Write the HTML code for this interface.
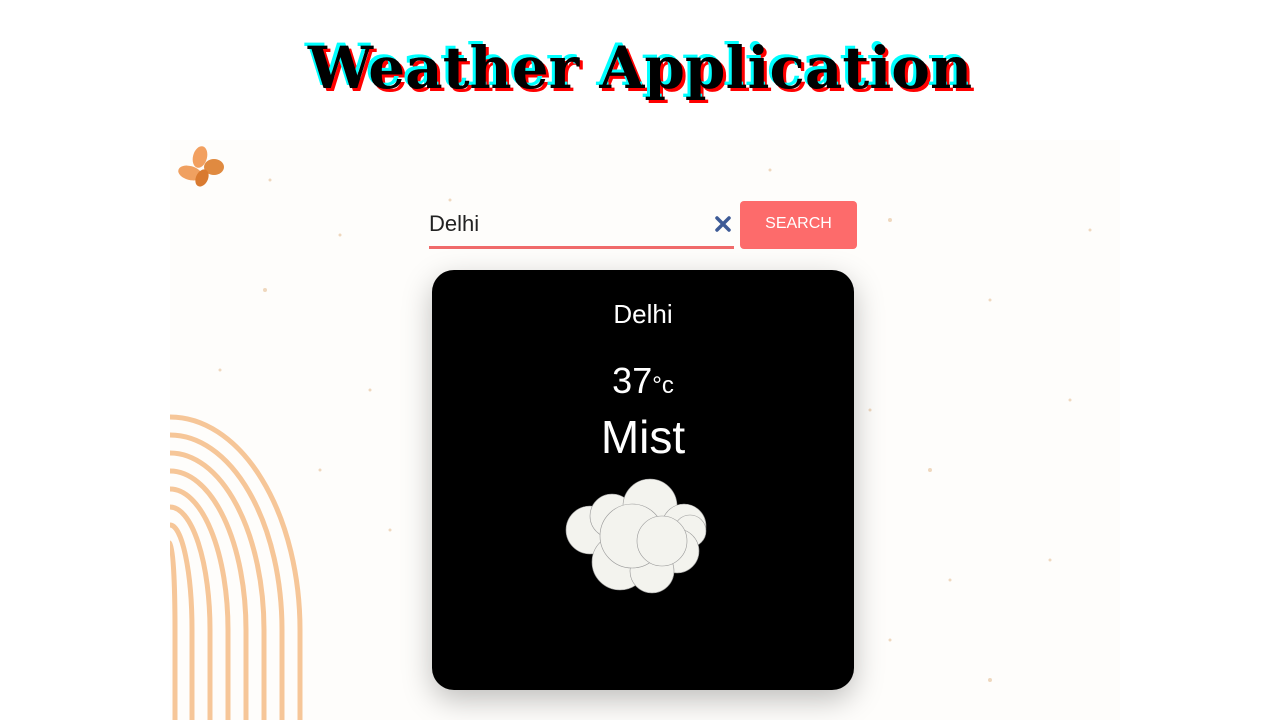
<!DOCTYPE html>
<html><head><style>
body{margin:0;width:1280px;height:720px;background:#fff;position:relative;overflow:hidden;font-family:"Liberation Sans",sans-serif}
h1{position:absolute;top:34px;left:0;width:1280px;text-align:center;margin:0;font:bold 58px "DejaVu Serif",serif;color:#000;text-shadow:-3px -3px 0 #0ff,3px 3px 0 #f00}
.bg{position:absolute;left:170px;top:140px;width:950px;height:580px;background:#fefdfb}
.inp{position:absolute;left:429px;top:200px;width:305px;height:46px;border-bottom:3px solid #f06a6a}
.inp span{position:absolute;left:0;top:11px;font-size:22px;color:#222}
.btn{position:absolute;left:740px;top:201px;width:117px;height:48px;background:#fd6b6b;border-radius:4px;color:#fff;font-size:16px;text-align:center;line-height:46px}
.card{position:absolute;left:432px;top:270px;width:422px;height:420px;background:#000;border-radius:22px;box-shadow:0 10px 30px rgba(0,0,0,.25);color:#fff;text-align:center;font-family:"Liberation Sans",sans-serif}
</style></head><body>
<h1>Weather Application</h1>
<div class="bg">
<svg width="950" height="580" style="position:absolute;left:0;top:0">
<g fill="#e8c7a4" opacity=".7">
<circle cx="100" cy="40" r="1.5"/><circle cx="170" cy="95" r="1.5"/><circle cx="95" cy="150" r="2"/><circle cx="280" cy="60" r="1.5"/><circle cx="600" cy="30" r="1.5"/><circle cx="720" cy="80" r="2"/><circle cx="820" cy="160" r="1.5"/><circle cx="900" cy="260" r="1.5"/><circle cx="760" cy="330" r="2"/><circle cx="880" cy="420" r="1.5"/><circle cx="720" cy="500" r="1.5"/><circle cx="820" cy="540" r="2"/><circle cx="200" cy="250" r="1.5"/><circle cx="150" cy="330" r="1.5"/><circle cx="220" cy="390" r="1.5"/><circle cx="640" cy="200" r="1.5"/><circle cx="920" cy="90" r="1.5"/><circle cx="50" cy="230" r="1.5"/><circle cx="780" cy="440" r="1.5"/><circle cx="700" cy="270" r="1.5"/>
</g>
<g fill="none" stroke="#f6c698" stroke-width="5">
<path d="M0 277 A130 213 0 0 1 130 490 V580"/>
<path d="M0 295 A112 195 0 0 1 112 490 V580"/>
<path d="M0 313 A94 177 0 0 1 94 490 V580"/>
<path d="M0 331 A76 159 0 0 1 76 490 V580"/>
<path d="M0 349 A58 141 0 0 1 58 490 V580"/>
<path d="M0 367 A40 123 0 0 1 40 490 V580"/>
<path d="M0 385 A22 105 0 0 1 22 490 V580"/>
<path d="M0 403 A5 87 0 0 1 5 490 V580"/>
</g>
<g transform="translate(8,8)">
<ellipse cx="22" cy="9" rx="7" ry="11" fill="#f2a060" transform="rotate(15 22 9)"/>
<ellipse cx="12" cy="25" rx="12" ry="7" fill="#f0a060" transform="rotate(15 12 25)"/>
<ellipse cx="36" cy="19" rx="10" ry="8" fill="#e08a40"/>
<ellipse cx="24" cy="30" rx="6" ry="9" fill="#d97a30" transform="rotate(25 24 30)"/>
</g>
</svg>
</div>
<div class="inp"><span>Delhi</span><svg width="16" height="16" style="position:absolute;left:286px;top:16px"><path d="M2 2L14 14M14 2L2 14" stroke="#3d5a96" stroke-width="3.5" stroke-linecap="round"/></svg></div>
<div class="btn">SEARCH</div>
<div class="card">
<div style="position:absolute;top:29px;width:100%;font-size:26px">Delhi</div>
<div style="position:absolute;top:90px;width:100%;font-size:36px">37<span style="font-size:24px">°c</span></div>
<div style="position:absolute;top:140px;width:100%;font-size:46px">Mist</div>
<svg width="150" height="120" style="position:absolute;left:130px;top:206px" viewBox="0 0 150 120">
<g fill="#f3f3ee" stroke="#999" stroke-width=".6">
<circle cx="28" cy="54" r="24"/><circle cx="50" cy="40" r="22"/><circle cx="88" cy="30" r="27"/><circle cx="122" cy="50" r="22"/><circle cx="128" cy="55" r="16"/><circle cx="115" cy="75" r="22"/><circle cx="58" cy="86" r="28"/><circle cx="90" cy="95" r="22"/><circle cx="70" cy="60" r="32"/><circle cx="100" cy="65" r="25"/>
</g></svg>
</div>
</body></html>
